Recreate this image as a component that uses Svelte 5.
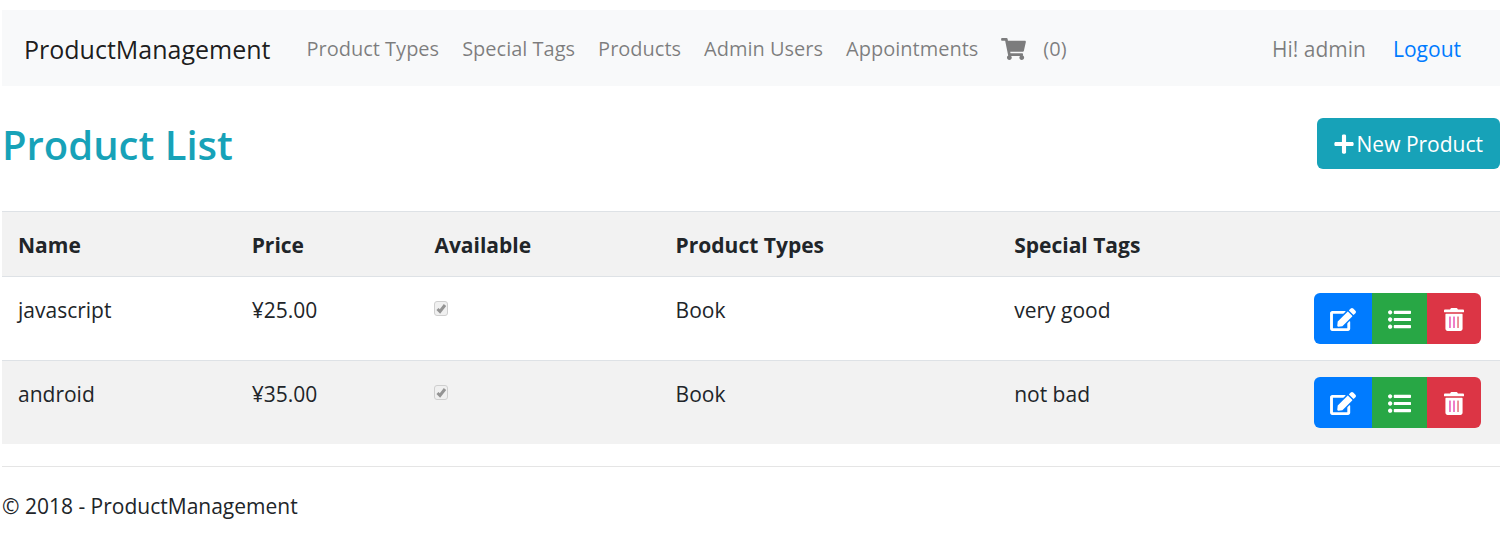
<script>
  const links = ['Product Types', 'Special Tags', 'Products', 'Admin Users', 'Appointments'];
  const cartCount = 0;
  const products = [
    { name: 'javascript', price: '¥25.00', available: true, type: 'Book', tag: 'very good' },
    { name: 'android', price: '¥35.00', available: true, type: 'Book', tag: 'not bad' }
  ];
</script>

<div class="page">
  <nav class="navbar">
    <a class="brand" href="#home">ProductManagement</a>
    <ul class="links">
      {#each links as link}
        <li><a href="#{link}">{link}</a></li>
      {/each}
      <li>
        <a class="cart" href="#cart" aria-label="Cart">
          <svg class="icon" viewBox="0 0 576 512" width="25" height="22" aria-hidden="true"><path d="M528.12 301.319l47.273-208C578.806 78.301 567.391 64 551.99 64H159.208l-9.166-44.81C147.758 8.021 137.93 0 126.529 0H24C10.745 0 0 10.745 0 24v16c0 13.255 10.745 24 24 24h69.883l70.248 343.435C147.325 417.1 136 435.222 136 456c0 30.928 25.072 56 56 56s56-25.072 56-56c0-15.674-6.447-29.835-16.824-40h209.647C430.447 426.165 424 440.326 424 456c0 30.928 25.072 56 56 56s56-25.072 56-56c0-22.172-12.888-41.332-31.579-50.405l5.517-24.276c3.413-15.018-8.002-29.319-23.403-29.319H218.117l-6.545-32h293.145c11.206 0 20.92-7.754 23.403-18.681z" /></svg>
          <span>({cartCount})</span>
        </a>
      </li>
    </ul>
    <div class="account">
      <a class="user" href="#account">Hi! admin</a>
      <button class="logout" type="button">Logout</button>
    </div>
  </nav>

  <main>
    <header class="heading">
      <h2>Product List</h2>
      <a class="new" href="#create">
        <svg class="icon" viewBox="0 0 448 512" width="20" height="22" aria-hidden="true"><path d="M416 208H272V64c0-17.67-14.33-32-32-32h-32c-17.67 0-32 14.33-32 32v144H32c-17.67 0-32 14.33-32 32v32c0 17.67 14.33 32 32 32h144v144c0 17.67 14.33 32 32 32h32c17.67 0 32-14.33 32-32V304h144c17.67 0 32-14.33 32-32v-32c0-17.67-14.33-32-32-32z" /></svg>
        <span>New Product</span>
      </a>
    </header>

    <table>
      <colgroup>
        <col class="c-name" /><col class="c-price" /><col class="c-available" />
        <col class="c-type" /><col class="c-tag" /><col />
      </colgroup>
      <thead>
        <tr>
          <th>Name</th>
          <th>Price</th>
          <th>Available</th>
          <th>Product Types</th>
          <th>Special Tags</th>
          <th></th>
        </tr>
      </thead>
      <tbody>
        {#each products as p}
          <tr>
            <td>{p.name}</td>
            <td>{p.price}</td>
            <td><input type="checkbox" checked={p.available} disabled aria-label="Available" /></td>
            <td>{p.type}</td>
            <td>{p.tag}</td>
            <td class="actions">
              <div class="group">
                <a class="edit" href="#edit" aria-label="Edit">
                  <svg class="icon" viewBox="0 0 576 512" width="26" height="23" aria-hidden="true"><path d="M402.6 83.2l90.2 90.2c3.8 3.8 3.8 10 0 13.8L274.4 405.6l-92.8 10.3c-12.4 1.4-22.9-9.1-21.5-21.5l10.3-92.8L388.8 83.2c3.8-3.8 10-3.8 13.8 0zm162-22.9l-48.8-48.8c-15.2-15.2-39.9-15.2-55.2 0l-35.4 35.4c-3.8 3.8-3.8 10 0 13.8l90.2 90.2c3.8 3.8 10 3.8 13.8 0l35.4-35.4c15.2-15.3 15.2-40 0-55.2zM384 346.2V448H64V128h229.8c3.2 0 6.2-1.3 8.5-3.5l40-40c7.6-7.6 2.2-20.5-8.5-20.5H48C21.5 64 0 85.5 0 112v352c0 26.5 21.5 48 48 48h352c26.5 0 48-21.5 48-48V306.2c0-10.7-12.9-16-20.5-8.5l-40 40c-2.2 2.3-3.5 5.3-3.5 8.5z" /></svg>
                </a>
                <a class="details" href="#details" aria-label="Details">
                  <svg class="icon" viewBox="0 0 512 512" width="23" height="23" aria-hidden="true"><path d="M96 96c0 26.5-21.5 48-48 48S0 122.5 0 96s21.5-48 48-48 48 21.5 48 48zM48 208c-26.5 0-48 21.5-48 48s21.5 48 48 48 48-21.5 48-48-21.5-48-48-48zm0 160c-26.5 0-48 21.5-48 48s21.5 48 48 48 48-21.5 48-48-21.5-48-48-48zm96-236h352c8.8 0 16-7.2 16-16V76c0-8.8-7.2-16-16-16H144c-8.8 0-16 7.2-16 16v40c0 8.8 7.2 16 16 16zm0 160h352c8.8 0 16-7.2 16-16v-40c0-8.8-7.2-16-16-16H144c-8.8 0-16 7.2-16 16v40c0 8.8 7.2 16 16 16zm0 160h352c8.8 0 16-7.2 16-16v-40c0-8.8-7.2-16-16-16H144c-8.8 0-16 7.2-16 16v40c0 8.8 7.2 16 16 16z" /></svg>
                </a>
                <a class="delete" href="#delete" aria-label="Delete">
                  <svg class="icon" viewBox="0 0 448 512" width="20" height="23" aria-hidden="true"><path d="M0 84V56c0-13.3 10.7-24 24-24h112l9.4-18.7c4-8.2 12.3-13.3 21.4-13.3h114.3c9.1 0 17.4 5.1 21.5 13.3L312 32h112c13.3 0 24 10.7 24 24v28c0 6.6-5.4 12-12 12H12C5.4 96 0 90.6 0 84zm416 56v324c0 26.5-21.5 48-48 48H80c-26.5 0-48-21.5-48-48V140c0-6.6 5.4-12 12-12h360c6.6 0 12 5.4 12 12z" /><rect class="slot" x="122" y="190" width="24" height="256" /><rect class="slot" x="212" y="190" width="24" height="256" /><rect class="slot last" x="302" y="190" width="24" height="256" /></svg>
                </a>
              </div>
            </td>
          </tr>
        {/each}
      </tbody>
    </table>
  </main>

  <footer>
    <p>© 2018 - ProductManagement</p>
  </footer>
</div>

<style>
  :global(body) {
    background: #fff;
  }
  .page {
    box-sizing: border-box;
    padding: 10px 7px 0 2px;
    font: 21px/32px 'Segoe UI', 'Open Sans', 'Noto Sans', sans-serif;
    color: #212529;
  }
  a {
    color: inherit;
    text-decoration: none;
  }
  .icon {
    display: block;
    fill: currentColor;
  }
  .navbar {
    display: flex;
    align-items: center;
    min-height: 76px;
    padding: 1px 22px 0;
    box-sizing: border-box;
    background: #f8f9fa;
    color: rgba(0, 0, 0, 0.5);
  }
  .brand {
    margin-right: 36px;
    font-size: 25px;
    color: rgba(0, 0, 0, 0.9);
  }
  .links {
    display: flex;
    gap: 23px;
    margin: 0;
    padding: 0;
    font-size: 20px;
    list-style: none;
  }
  .cart {
    display: flex;
    align-items: center;
    gap: 17px;
  }
  .account {
    display: flex;
    align-items: center;
    margin-left: auto;
  }
  .logout {
    padding: 0 17px;
    margin-left: 10px;
    border: 0;
    background: none;
    font: inherit;
    color: #007bff;
    cursor: pointer;
  }
  .heading {
    display: flex;
    justify-content: space-between;
    align-items: center;
    margin: 32px 0 42px;
  }
  h2 {
    margin: 0;
    padding-top: 2px;
    font-size: 40px;
    line-height: 49px;
    font-weight: 600;
    color: #17a2b8;
  }
  .new {
    display: flex;
    align-items: center;
    gap: 3px;
    height: 51px;
    padding: 0 17px;
    box-sizing: border-box;
    border-radius: 6px;
    background: #17a2b8;
    color: #fff;
  }
  table {
    width: 100%;
    table-layout: fixed;
    border-collapse: separate;
    border-spacing: 0;
  }
  .c-name { width: 15.6%; }
  .c-price { width: 12.2%; }
  .c-available { width: 16.1%; }
  .c-type { width: 22.6%; }
  .c-tag { width: 20%; }
  th,
  td {
    padding: 17px 16px 15px;
    border-top: 1px solid #dee2e6;
    text-align: left;
    vertical-align: top;
  }
  th {
    font-weight: 700;
  }
  thead tr,
  tbody tr:nth-child(even) {
    background: #f2f2f2;
  }
  input {
    appearance: none;
    display: block;
    box-sizing: border-box;
    width: 14px;
    height: 15px;
    margin: 7px 0 0;
    border: 1px solid #cfcfcf;
    border-radius: 3px;
    background: #f0f0f0;
  }
  input:checked {
    background: #f0f0f0 url("data:image/svg+xml,%3Csvg xmlns='http://www.w3.org/2000/svg' viewBox='0 0 12 13'%3E%3Cpath d='M2.5 7l2.500 2.500L10 3' fill='none' stroke='%23949494' stroke-width='3'/%3E%3C/svg%3E") center / 12px 13px no-repeat;
  }
  .actions {
    padding: 16px 19px 16px 16px;
  }
  .group {
    display: flex;
    justify-content: flex-end;
    color: #fff;
  }
  .group a {
    display: flex;
    align-items: center;
    justify-content: center;
    height: 51px;
    padding-top: 2px;
    box-sizing: border-box;
  }
  .edit {
    width: 58px;
    border-radius: 6px 0 0 6px;
    background: #007bff;
  }
  .details {
    width: 55px;
    background: #28a745;
  }
  .delete {
    width: 54px;
    border-radius: 0 6px 6px 0;
    background: #dc3545;
  }
  .group .icon {
    flex: none;
  }
  .slot {
    fill: #e0109a;
  }
  .slot.last {
    fill: #dc3545;
  }
  footer {
    margin-top: 22px;
    padding-top: 23px;
    border-top: 1px solid #e5e5e5;
  }
  footer p {
    margin: 0;
  }
</style>
